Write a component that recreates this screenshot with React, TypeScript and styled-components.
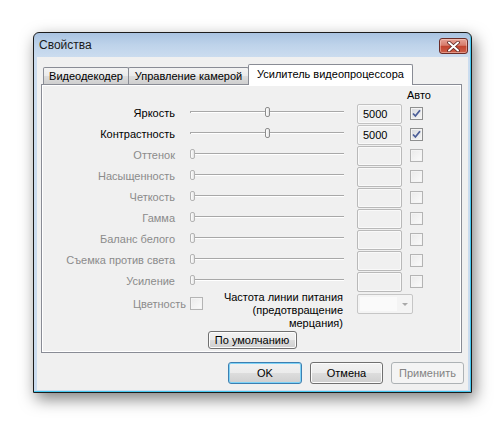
import React from 'react';
import styled, { createGlobalStyle } from 'styled-components';

const GlobalStyle = createGlobalStyle`
  html, body {
    margin: 0;
    padding: 0;
    background: #ffffff;
  }
  body {
    font-family: 'Liberation Sans', Arial, sans-serif;
    font-size: 11px;
    color: #000000;
  }
`;

const Desktop = styled.div`
  width: 504px;
  height: 426px;
  padding: 32px 0 0 33px;
  box-sizing: border-box;
  overflow: hidden;
`;

const Window = styled.div`
  width: 439px;
  height: 361px;
  box-sizing: border-box;
  border: 1px solid #1c1c1c;
  border-radius: 6px 6px 0 0;
  background: linear-gradient(#a9c3e1 0px, #bed3ea 12px, #cbdcef 24px, #cbdcef 100%);
  box-shadow: inset -1px -1px 0 #45c8f0, 3px 6px 16px rgba(0, 0, 0, 0.5);
  display: flex;
  flex-direction: column;
`;

const TitleBar = styled.div`
  height: 24px;
  display: flex;
  align-items: center;
  justify-content: space-between;
  padding: 0 3px 0 5px;
`;

const Title = styled.span`
  font-size: 12px;
  color: #1a1a1a;
`;

const CloseButton = styled.div`
  width: 29px;
  height: 16px;
  box-sizing: border-box;
  margin-top: 2px;
  border: 1px solid #6b2c28;
  border-radius: 3px;
  background: linear-gradient(#e6a397 0%, #d77c6c 45%, #c2442f 52%, #cc5f4a 100%);
  box-shadow: inset 0 0 0 1px rgba(255, 220, 210, 0.45);
  display: flex;
  align-items: center;
  justify-content: center;
`;

const Client = styled.div`
  flex: 1;
  margin: 0 3px 2px 3px;
  background: #f0f0f0;
  display: flex;
  flex-direction: column;
  padding: 7px 0 6px 4px;
`;

const TabStrip = styled.div`
  height: 20px;
  display: flex;
  align-items: flex-end;
  padding-left: 2px;
`;

const Tab = styled.div<{ $width: number; $active?: boolean }>`
  width: ${(p) => p.$width}px;
  height: ${(p) => (p.$active ? 21 : 17)}px;
  margin-bottom: ${(p) => (p.$active ? -1 : 0)}px;
  margin-left: -1px;
  box-sizing: border-box;
  border: 1px solid #898c95;
  border-bottom: none;
  border-radius: 2px 2px 0 0;
  background: ${(p) =>
    p.$active
      ? '#ffffff'
      : 'linear-gradient(#f3f3f3 0%, #ebebeb 50%, #dddddd 50%, #cfcfcf 100%)'};
  position: relative;
  z-index: ${(p) => (p.$active ? 1 : 0)};
  display: flex;
  align-items: center;
  justify-content: center;
  padding-bottom: ${(p) => (p.$active ? 2 : 0)}px;
  white-space: nowrap;

  &:first-child {
    margin-left: 0;
  }
`;

const TabPage = styled.div`
  width: 421px;
  height: 269px;
  box-sizing: border-box;
  border: 1px solid #898c95;
  box-shadow: inset 0 0 0 1px #ffffff;
  background: #f0f0f0;
  display: flex;
  flex-direction: column;
`;

const HeaderRow = styled.div`
  height: 19px;
  display: flex;
  align-items: center;
  padding-left: 365px;
`;

const Row = styled.div`
  height: 21px;
  display: flex;
  align-items: flex-start;
`;

const Label = styled.div<{ $disabled?: boolean }>`
  width: 133px;
  height: 20px;
  line-height: 18px;
  text-align: right;
  white-space: nowrap;
  color: ${(p) => (p.$disabled ? '#8b8b8b' : '#000000')};
`;

const SliderBox = styled.div`
  width: 154px;
  height: 20px;
  margin-left: 15px;
  position: relative;
  display: flex;
  align-items: center;
  margin-top: -2px;
`;

const Groove = styled.div`
  width: 100%;
  height: 2px;
  box-sizing: border-box;
  border-top: 1px solid #a8a8a8;
  border-left: 1px solid #a8a8a8;
  background: #ffffff;
`;

const Thumb = styled.div<{ $disabled?: boolean }>`
  position: absolute;
  top: 5px;
  width: 5px;
  height: 10px;
  box-sizing: border-box;
  border: 1px solid ${(p) => (p.$disabled ? '#b4b4b4' : '#8d8d8d')};
  border-radius: 2px;
  background: linear-gradient(90deg, #ffffff, #e4e4e4);
`;

const ValueBox = styled.div<{ $disabled?: boolean }>`
  width: 45px;
  height: 20px;
  margin-left: 13px;
  box-sizing: border-box;
  border: 1px solid ${(p) => (p.$disabled ? '#b9b9b9' : '#c2c2c2')};
  border-radius: 2px;
  box-shadow: inset 0 0 0 1px #f9f9f9;
  background: #f0f0f0;
  padding-left: 5px;
  line-height: 18px;
`;

const CheckBox = styled.div<{ $disabled?: boolean }>`
  width: 13px;
  height: 13px;
  box-sizing: border-box;
  border: 1px solid ${(p) => (p.$disabled ? '#b4b4b4' : '#8e8f8f')};
  background: ${(p) =>
    p.$disabled
      ? 'linear-gradient(135deg, #eaeaea, #fbfbfb)'
      : 'linear-gradient(135deg, #d6d8dc, #f7f7f7)'};
  box-shadow: inset 0 0 0 1px #f4f4f4;
  display: flex;
  align-items: center;
  justify-content: center;
`;

const CheckCell = styled.div`
  margin-left: 8px;
  margin-top: 3px;
`;

const BottomRow = styled.div`
  height: 38px;
  display: flex;
  align-items: flex-start;
`;

const ColorCell = styled.div`
  width: 161px;
  display: flex;
  justify-content: flex-end;
  align-items: center;
  gap: 4px;
  margin-top: 4px;
  color: #8b8b8b;
`;

const FreqLabel = styled.div`
  width: 140px;
  text-align: right;
  line-height: 13px;
  margin-top: -2px;
`;

const Combo = styled.div`
  width: 56px;
  height: 20px;
  margin-left: 14px;
  margin-top: 1px;
  box-sizing: border-box;
  border: 1px solid #c6c6c6;
  border-radius: 2px;
  background: #f4f4f4;
  display: flex;
`;

const ComboField = styled.div`
  flex: 1;
  margin: 2px 0 2px 2px;
  background: #fafafa;
`;

const ComboArrow = styled.div`
  width: 15px;
  display: flex;
  align-items: center;
  justify-content: center;

  &::after {
    content: '';
    border-left: 3px solid transparent;
    border-right: 3px solid transparent;
    border-top: 3px solid #a9a9a9;
  }
`;

const DefaultRow = styled.div`
  display: flex;
  justify-content: center;
  padding-left: 1px;
`;

const Button = styled.button<{ $width: number; $primary?: boolean; $height?: number }>`
  width: ${(p) => p.$width}px;
  height: ${(p) => p.$height ?? 22}px;
  box-sizing: border-box;
  padding: 0;
  margin: 0;
  font-family: inherit;
  font-size: 11px;
  color: #000000;
  border: 1px solid ${(p) => (p.$primary ? '#3c7fb1' : '#707070')};
  border-radius: 3px;
  background: linear-gradient(#f2f2f2 0%, #ebebeb 50%, #dddddd 50%, #cfcfcf 100%);
  box-shadow: inset 0 0 0 1px ${(p) => (p.$primary ? '#7fd3f7' : '#fcfcfc')};
  line-height: 1;

  &:disabled {
    border-color: #adb2b5;
    background: #f4f4f4;
    box-shadow: none;
    color: #838383;
  }
`;

const ButtonBar = styled.div`
  display: flex;
  justify-content: flex-end;
  gap: 8px;
  margin-top: 9px;
  padding-right: 4px;
`;

type Prop = { label: string; value?: number; auto?: boolean };

const props: Prop[] = [
  { label: 'Яркость', value: 5000, auto: true },
  { label: 'Контрастность', value: 5000, auto: true },
  { label: 'Оттенок' },
  { label: 'Насыщенность' },
  { label: 'Четкость' },
  { label: 'Гамма' },
  { label: 'Баланс белого' },
  { label: 'Съемка против света' },
  { label: 'Усиление' },
];

const Check = () => (
  <svg width="9" height="9" viewBox="0 0 9 9">
    <path d="M1 4.5 L3.4 7 L8 1.2" fill="none" stroke="#4b5e98" strokeWidth="1.8" />
  </svg>
);

const Slider: React.FC<{ value?: number }> = ({ value }) => {
  const disabled = value === undefined;
  const pos = disabled ? 0 : ((value as number) / 10000) * (154 - 5);
  return (
    <SliderBox>
      <Groove />
      <Thumb $disabled={disabled} style={{ left: pos }} />
    </SliderBox>
  );
};

const App: React.FC = () => {
  return (
    <Desktop>
      <GlobalStyle />
      <Window>
        <TitleBar>
          <Title>Свойства</Title>
          <CloseButton>
            <svg width="13" height="11" viewBox="0 0 13 11">
              <path d="M2 1.5 L11 9.5 M11 1.5 L2 9.5" stroke="#5a2420" strokeWidth="3.6" strokeLinecap="round" />
              <path d="M2 1.5 L11 9.5 M11 1.5 L2 9.5" stroke="#ffffff" strokeWidth="2" strokeLinecap="round" />
            </svg>
          </CloseButton>
        </TitleBar>
        <Client>
          <TabStrip>
            <Tab $width={86}>Видеодекодер</Tab>
            <Tab $width={121}>Управление камерой</Tab>
            <Tab $width={165} $active>
              Усилитель видеопроцессора
            </Tab>
          </TabStrip>
          <TabPage>
            <HeaderRow>Авто</HeaderRow>
            {props.map((p) => {
              const disabled = p.value === undefined;
              return (
                <Row key={p.label}>
                  <Label $disabled={disabled}>{p.label}</Label>
                  <Slider value={p.value} />
                  <ValueBox $disabled={disabled}>{p.value}</ValueBox>
                  <CheckCell>
                    <CheckBox $disabled={disabled}>{p.auto && <Check />}</CheckBox>
                  </CheckCell>
                </Row>
              );
            })}
            <BottomRow>
              <ColorCell>
                Цветность
                <CheckBox $disabled />
              </ColorCell>
              <FreqLabel>
                Частота линии питания
                <br />
                (предотвращение
                <br />
                мерцания)
              </FreqLabel>
              <Combo>
                <ComboField />
                <ComboArrow />
              </Combo>
            </BottomRow>
            <DefaultRow>
              <Button $width={89} $height={18}>
                По умолчанию
              </Button>
            </DefaultRow>
          </TabPage>
          <ButtonBar>
            <Button $width={74} $primary>
              OK
            </Button>
            <Button $width={73}>Отмена</Button>
            <Button $width={73} disabled>
              Применить
            </Button>
          </ButtonBar>
        </Client>
      </Window>
    </Desktop>
  );
};

export default App;
